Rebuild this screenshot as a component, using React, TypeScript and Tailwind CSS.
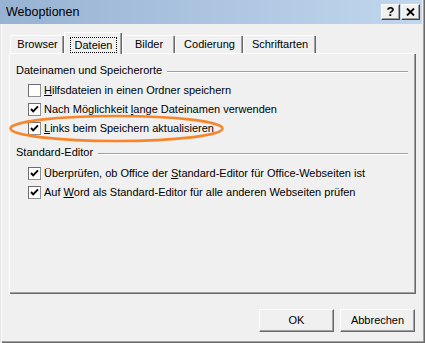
import React from 'react';

const ui = "font-['Liberation_Sans',Arial,sans-serif]";

function CheckBox({ checked }: { checked: boolean }) {
  return (
    <span className="flex h-[13px] w-[13px] shrink-0 items-center justify-center border border-[#8e8f8f] border-t-[#6d6d6d] border-l-[#6d6d6d] bg-white">
      {checked && (
        <svg width="11" height="11" viewBox="0 0 11 11">
          <path d="M2 5 L4.2 7.4 L9 2.4" fill="none" stroke="#000" strokeWidth="1.9" />
        </svg>
      )}
    </span>
  );
}

function Row({ checked, children }: { checked: boolean; children: React.ReactNode }) {
  return (
    <div className="flex h-[19px] items-center gap-[3px] pl-[12px]">
      <CheckBox checked={checked} />
      <span className="whitespace-nowrap">{children}</span>
    </div>
  );
}

function GroupHeader({ label }: { label: string }) {
  return (
    <div className="flex h-[13px] items-center gap-[5px]">
      <span className="whitespace-nowrap">{label}</span>
      <div className="mt-[2px] h-[2px] flex-1 border-t border-t-[#a0a0a0] border-b border-b-white" />
    </div>
  );
}

function Tab({ label, width, active }: { label: string; width: string; active?: boolean }) {
  if (active) {
    return (
      <div
        className={`relative z-10 -mb-px flex h-[22px] ${width} items-start justify-center border-t border-l border-white bg-[#f0f0f0] pt-[4px] shadow-[inset_-1px_0_0_#696969,inset_-2px_0_0_#a0a0a0]`}
      >
        <span className="flex h-[16px] items-center border border-dotted border-black px-[4px]">{label}</span>
      </div>
    );
  }
  return (
    <div
      className={`flex h-[18px] ${width} items-center justify-center border-t border-l border-white bg-[#f0f0f0] shadow-[inset_-1px_0_0_#696969,inset_-2px_0_0_#a0a0a0]`}
    >
      {label}
    </div>
  );
}

function Button({ children }: { children: React.ReactNode }) {
  return (
    <button className="flex h-[23px] w-[75px] items-center justify-center border border-t-white border-l-white border-r-[#696969] border-b-[#696969] bg-[#f0f0f0] shadow-[inset_-1px_-1px_0_#a0a0a0]">
      {children}
    </button>
  );
}

export default function App() {
  return (
    <div
      className={`relative flex h-[343px] w-[425px] flex-col bg-[#f0f0f0] text-[11px] text-black ${ui} shadow-[inset_1px_0_0_#e3e3e3,inset_2px_0_0_#ffffff,inset_-1px_-1px_0_#696969,inset_-2px_-2px_0_#a0a0a0]`}
    >
      {/* Title bar */}
      <div className="mr-[3px] flex h-[24px] items-center bg-linear-to-r from-[#97b2d2] to-[#c1d7ee] pl-[6px] pr-[2px]">
        <span className="flex-1 text-[12.5px]">Weboptionen</span>
        <div className="flex gap-[1px]">
          <div className="flex h-[16px] w-[19px] items-center justify-center border border-t-white border-l-white border-r-[#404040] border-b-[#404040] bg-[#f0f0f0] text-[13px] font-bold shadow-[inset_-1px_-1px_0_#a0a0a0]">
            ?
          </div>
          <div className="flex h-[16px] w-[19px] items-center justify-center border border-t-white border-l-white border-r-[#404040] border-b-[#404040] bg-[#f0f0f0] shadow-[inset_-1px_-1px_0_#a0a0a0]">
            <svg width="9" height="8" viewBox="0 0 9 8">
              <path d="M1 0.5 L8 7.5 M8 0.5 L1 7.5" stroke="#000" strokeWidth="1.8" />
            </svg>
          </div>
        </div>
      </div>

      {/* Tabs */}
      <div className="mt-[8px] flex h-[21px] items-end pl-[10px]">
        <Tab label="Browser" width="w-[54px]" />
        <Tab label="Dateien" width="w-[58px]" active />
        <Tab label="Bilder" width="w-[53px]" />
        <Tab label="Codierung" width="w-[68px]" />
        <Tab label="Schriftarten" width="w-[73px]" />
      </div>

      {/* Panel */}
      <div className="ml-[9px] flex h-[241px] w-[407px] flex-col border-t border-l border-white px-[6px] pt-[10px] pr-[8px] shadow-[inset_-1px_-1px_0_#696969,inset_-2px_-2px_0_#a0a0a0]">
        <GroupHeader label="Dateinamen und Speicherorte" />
        <div className="mt-[4px] flex flex-col">
          <Row checked={false}>
            <span className="underline">H</span>ilfsdateien in einen Ordner speichern
          </Row>
          <Row checked>
            Nach Möglichkeit <span className="underline">l</span>ange Dateinamen verwenden
          </Row>
          <Row checked>
            <span className="underline">L</span>inks beim Speichern aktualisieren
          </Row>
        </div>
        <div className="mt-[8px]">
          <GroupHeader label="Standard-Editor" />
        </div>
        <div className="mt-[5px] flex flex-col">
          <Row checked>
            Überprüfen, ob Office der <span className="underline">S</span>tandard-Editor für Office-Webseiten ist
          </Row>
          <Row checked>
            Auf <span className="underline">W</span>ord als Standard-Editor für alle anderen Webseiten prüfen
          </Row>
        </div>
      </div>

      {/* Buttons */}
      <div className="mt-[15px] flex justify-end gap-[6px] pr-[10px]">
        <Button>OK</Button>
        <Button>Abbrechen</Button>
      </div>

      {/* Highlight ellipse */}
      <svg className="pointer-events-none absolute left-0 top-[100px]" width="240" height="50" viewBox="0 0 240 50">
        <ellipse cx="116.5" cy="28.5" rx="106" ry="12.5" fill="none" stroke="#f7852a" strokeWidth="2.6" />
      </svg>
    </div>
  );
}
